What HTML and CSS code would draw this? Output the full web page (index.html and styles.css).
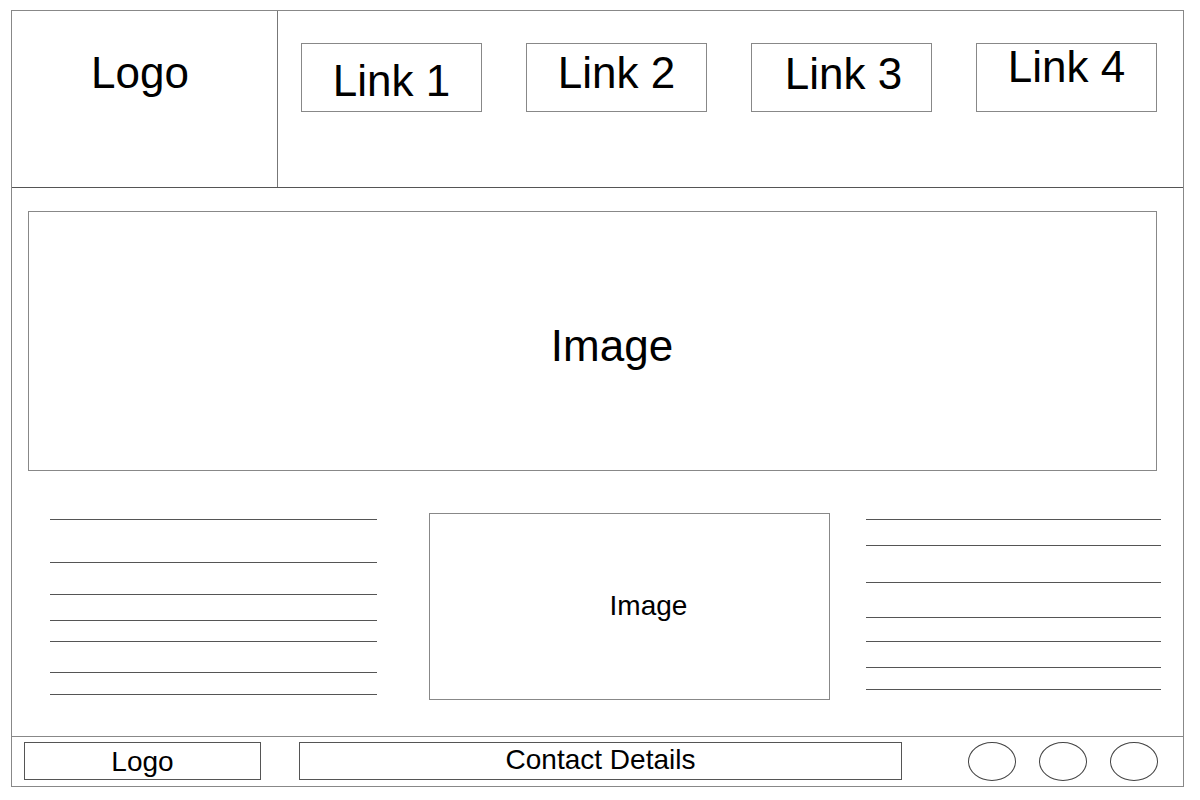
FILE: index.html
```html
<!DOCTYPE html>
<html lang="en">
<head>
<meta charset="utf-8">
<title>Wireframe</title>
<link rel="stylesheet" href="styles.css">
</head>
<body>
<div class="frame">
  <header class="header">
    <div class="logo-cell">Logo</div>
    <nav class="nav">
      <div class="link link-1">Link 1</div>
      <div class="link link-2">Link 2</div>
      <div class="link link-3">Link 3</div>
      <div class="link link-4">Link 4</div>
    </nav>
  </header>
  <main class="main">
    <div class="hero">Image</div>
    <div class="row">
      <div class="lines lines-left">
        <div class="line"></div><div class="line"></div><div class="line"></div><div class="line"></div><div class="line"></div><div class="line"></div><div class="line"></div>
      </div>
      <div class="thumb">Image</div>
      <div class="lines lines-right">
        <div class="line"></div><div class="line"></div><div class="line"></div><div class="line"></div><div class="line"></div><div class="line"></div><div class="line"></div>
      </div>
    </div>
  </main>
  <footer class="footer">
    <div class="foot-logo">Logo</div>
    <div class="contact">Contact Details</div>
    <div class="socials">
      <div class="circle"></div>
      <div class="circle"></div>
      <div class="circle"></div>
    </div>
  </footer>
</div>
</body>
</html>
```
FILE: styles.css
```css
* { box-sizing: border-box; }
html, body { margin: 0; padding: 0; background: #fff; }
body {
  font-family: "Liberation Sans", Arial, sans-serif;
  color: #000;
}
.frame {
  margin: 10px 0 0 11px;
  width: 1173px;
  height: 777px;
  border: 1px solid #888;
  display: flex;
  flex-direction: column;
}
.header {
  height: 177px;
  border-bottom: 1px solid #555;
  display: flex;
  flex: none;
}
.logo-cell {
  width: 266px;
  border-right: 1px solid #777;
  font-size: 44px;
  line-height: 1;
  padding: 40px 0 0 79px;
}
.nav {
  display: flex;
  gap: 44px;
  padding: 32px 0 0 23px;
  align-items: flex-start;
}
.link {
  width: 181px;
  height: 69px;
  border: 1px solid #888;
  font-size: 44px;
  line-height: 1;
  text-align: center;
}
.link-1 { padding-top: 15px; }
.link-2 { padding-top: 7px; }
.link-3 { padding-top: 8px; padding-left: 4px; }
.link-4 { padding-top: 1px; }
.main {
  flex: 1;
  padding: 23px 0 0 16px;
}
.hero {
  width: 1129px;
  height: 260px;
  border: 1px solid #888;
  font-size: 44px;
  line-height: 1;
  text-align: center;
  padding: 112px 0 0 39px;
}
.row {
  display: flex;
  align-items: flex-start;
  margin-top: 42px;
  padding-left: 22px;
}
.lines { display: flex; flex-direction: column; }
.line { height: 1px; background: #555; }
.lines-left { width: 327px; }
.lines-right { width: 295px; margin-left: 36px; }
.thumb {
  width: 401px;
  height: 187px;
  margin-left: 52px;
  border: 1px solid #888;
  font-size: 28px;
  line-height: 1;
  text-align: center;
  padding: 78px 0 0 38px;
}
.lines-left .line:nth-child(1) { margin-top: 6px; }
.lines-left .line:nth-child(2) { margin-top: 42px; }
.lines-left .line:nth-child(3) { margin-top: 31px; }
.lines-left .line:nth-child(4) { margin-top: 25px; }
.lines-left .line:nth-child(5) { margin-top: 20px; }
.lines-left .line:nth-child(6) { margin-top: 30px; }
.lines-left .line:nth-child(7) { margin-top: 21px; }
.lines-right .line:nth-child(1) { margin-top: 6px; }
.lines-right .line:nth-child(2) { margin-top: 25px; }
.lines-right .line:nth-child(3) { margin-top: 36px; }
.lines-right .line:nth-child(4) { margin-top: 34px; }
.lines-right .line:nth-child(5) { margin-top: 23px; }
.lines-right .line:nth-child(6) { margin-top: 25px; }
.lines-right .line:nth-child(7) { margin-top: 21px; }
.footer {
  height: 50px;
  flex: none;
  border-top: 1px solid #888;
  display: flex;
  align-items: flex-start;
  padding: 5px 0 0 12px;
}
.foot-logo {
  width: 237px;
  height: 38px;
  border: 1px solid #555;
  font-size: 28px;
  line-height: 1;
  text-align: center;
  padding-top: 5px;
}
.contact {
  width: 603px;
  height: 38px;
  margin-left: 38px;
  border: 1px solid #555;
  font-size: 28px;
  line-height: 1;
  text-align: center;
  padding-top: 3px;
}
.socials {
  display: flex;
  gap: 23px;
  margin-left: 66px;
}
.circle {
  width: 48px;
  height: 39px;
  border: 1px solid #444;
  border-radius: 50%;
}
```
